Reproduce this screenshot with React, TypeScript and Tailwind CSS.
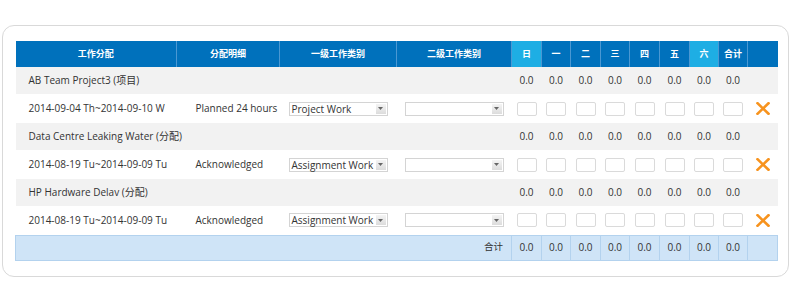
import React from "react";

const days = ["日", "一", "二", "三", "四", "五", "六"];
const weekend = [true, false, false, false, false, false, true];

const groups = [
  {
    title: "AB Team Project3 (项目)",
    range: "2014-09-04 Th~2014-09-10 W",
    detail: "Planned 24 hours",
    kind: "Project Work",
  },
  {
    title: "Data Centre Leaking Water (分配)",
    range: "2014-08-19 Tu~2014-09-09 Tu",
    detail: "Acknowledged",
    kind: "Assignment Work",
  },
  {
    title: "HP Hardware Delav (分配)",
    range: "2014-08-19 Tu~2014-09-09 Tu",
    detail: "Acknowledged",
    kind: "Assignment Work",
  },
];

const colWidths = [161, 103, 117, 115, 30, 29, 30, 29, 30, 30, 29, 29, 30];

function FakeSelect({ value }: { value?: string }) {
  return (
    <div className="flex items-center justify-between w-[99px] h-[14px] border border-[#d4d4d4] bg-white pl-[2px] pr-[1px]">
      <span className="text-[10px] leading-none text-[#333] whitespace-nowrap">{value}</span>
      <span className="flex items-center justify-center w-[10px] h-[10px] bg-gradient-to-b from-[#f4f4f4] to-[#dcdcdc]">
        <svg width="5" height="3" viewBox="0 0 5 3">
          <path d="M0 0h5L2.5 3z" fill="#666" />
        </svg>
      </span>
    </div>
  );
}

function XIcon() {
  return (
    <svg width="14" height="13" viewBox="0 0 14 13" className="block mx-auto">
      <path d="M1.5 1.2L12.5 11.8M12.5 1.2L1.5 11.8" stroke="#F7931E" strokeWidth="2.6" strokeLinecap="square" />
    </svg>
  );
}

export default function App() {
  return (
    <div className="w-[791px] h-[304px] bg-white pt-[25px] pl-[2px]" style={{ fontFamily: '"Open Sans", "Noto Sans CJK SC", sans-serif' }}>
      <div className="w-[787px] h-[252px] rounded-[12px] border border-[#d9d9d9] pt-[15px] pl-[12px]">
        <table className="table-fixed border-collapse w-[762px] text-[#333]">
          <colgroup>
            {colWidths.map((w, i) => (
              <col key={i} style={{ width: w }} />
            ))}
          </colgroup>
          <thead>
            <tr className="h-[26px] bg-[#0071bc] text-white text-[9px] font-bold">
              <th className="border-r border-[#4a98d3] font-bold">工作分配</th>
              <th className="border-r border-[#4a98d3] font-bold">分配明细</th>
              <th className="border-r border-[#4a98d3] font-bold">一级工作类别</th>
              <th className="border-r border-[#4a98d3] font-bold">二级工作类别</th>
              {days.map((d, i) => (
                <th
                  key={d}
                  className={`border-r border-[#4a98d3] font-bold ${weekend[i] ? "bg-[#1eaee4]" : ""}`}
                >
                  {d}
                </th>
              ))}
              <th className="border-r border-[#4a98d3] font-bold">合计</th>
              <th></th>
            </tr>
          </thead>
          <tbody className="text-[10px]">
            {groups.map((g) => (
              <React.Fragment key={g.title}>
                <tr className="h-[27px] bg-[#f2f2f2]">
                  <td colSpan={4} className="pl-[13px]">{g.title}</td>
                  {Array.from({ length: 8 }).map((_, i) => (
                    <td key={i} className="text-center">0.0</td>
                  ))}
                  <td></td>
                </tr>
                <tr className="h-[29px] bg-white">
                  <td className="pl-[13px] whitespace-nowrap">{g.range}</td>
                  <td className="pl-[19px] whitespace-nowrap">{g.detail}</td>
                  <td className="pl-[9px]">
                    <FakeSelect value={g.kind} />
                  </td>
                  <td className="pl-[8px]">
                    <FakeSelect />
                  </td>
                  {Array.from({ length: 8 }).map((_, i) => (
                    <td key={i} className="text-center">
                      <input
                        type="text"
                        className="block mx-auto w-[20px] h-[14px] border border-[#dadada] rounded-[2px] bg-white"
                      />
                    </td>
                  ))}
                  <td>
                    <XIcon />
                  </td>
                </tr>
              </React.Fragment>
            ))}
            <tr className="h-[25px] bg-[#cfe4f7] border border-[#b3d2ee]">
              <td colSpan={4} className="text-right pr-[8px] text-[9.5px] border-r border-[#b3d2ee]">合计</td>
              {Array.from({ length: 8 }).map((_, i) => (
                <td key={i} className="text-center border-r border-[#b3d2ee]">0.0</td>
              ))}
              <td></td>
            </tr>
          </tbody>
        </table>
      </div>
    </div>
  );
}
